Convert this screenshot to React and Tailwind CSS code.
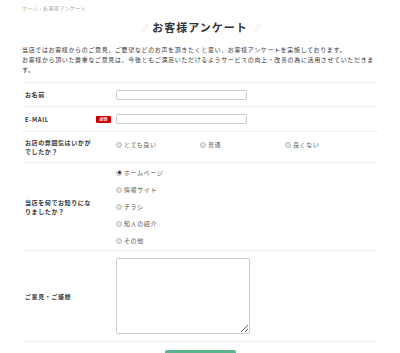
const jp = { fontFamily: '"Noto Sans CJK JP", "Noto Sans", sans-serif' };

const Radio = ({ label, checked }) => (
  <label className="flex items-center gap-[2px] text-[6px] tracking-[0.6px] text-[#555]">
    <span className="size-[6px] rounded-full border border-[#bbb] bg-[#e8e8e8] flex items-center justify-center">
      {checked && <span className="size-[3px] rounded-full bg-[#333]" />}
    </span>
    <span>{label}</span>
  </label>
);

const Row = ({ className, children }) => (
  <div className={`flex border-b border-[#eee] ${className}`}>{children}</div>
);

const Label = ({ children, required, className = "items-center" }) => (
  <div className={`w-[94px] shrink-0 pl-[3px] pr-[5px] flex justify-between ${className}`}>
    <div className="text-[6px] leading-[9px] tracking-[0.6px] font-bold text-[#333]">{children}</div>
    {required && (
      <span className="bg-[#cc0000] text-white text-[4px] font-bold rounded-[1px] w-[15px] h-[7px] flex items-center justify-center">
        必須
      </span>
    )}
  </div>
);

export default function App() {
  return (
    <div className="w-[400px] h-[353px] overflow-hidden bg-white px-[22px]" style={jp}>
      {/* breadcrumb */}
      <div className="pt-[5px] text-[5px] leading-[6px] tracking-[0.4px] text-[#999]">
        <span className="text-[#c9b98a]">ホーム</span> › お客様アンケート
      </div>

      {/* title */}
      <div className="mt-[9px] flex items-center justify-center gap-[6px]">
        <span className="text-[8px] font-light italic text-[#ddd2a8] tracking-[-1px]">//</span>
        <h1 className="text-[11px] leading-[14px] font-bold tracking-[1px] text-[#333]">お客様アンケート</h1>
        <span className="text-[8px] font-light italic text-[#ddd2a8] tracking-[-1px]">//</span>
      </div>

      {/* intro */}
      <p className="mt-[11px] text-[6px] leading-[10px] tracking-[0.64px] text-[#333]">
        当店ではお客様からのご意見、ご要望などのお声を頂きたくと思い、お客様アンケートを実施しております。
        <br />
        お客様から頂いた貴重なご意見は、今後ともご満足いただけるようサービスの向上・改善の為に活用させていただきま
        <br />
        す。
      </p>

      {/* form */}
      <div className="mt-[7px] border-t border-[#eee]">
        <Row className="h-[24px] items-center">
          <Label>お名前</Label>
          <input className="w-[131px] h-[10px] border border-[#ccc] rounded-[2px] outline-none" />
        </Row>
        <Row className="h-[25px] items-center">
          <Label required>E-MAIL</Label>
          <input className="w-[131px] h-[10px] border border-[#ccc] rounded-[2px] outline-none" />
        </Row>
        <Row className="h-[31px] items-center">
          <Label>
            お店の雰囲気はいかが
            <br />
            でしたか？
          </Label>
          <div className="self-start pt-[8px] flex">
            <div className="w-[84px]"><Radio label="とても良い" /></div>
            <div className="w-[85px]"><Radio label="普通" /></div>
            <div><Radio label="良くない" /></div>
          </div>
        </Row>
        <Row className="h-[88px] items-center">
          <Label>
            当店を何でお知りにな
            <br />
            りましたか？
          </Label>
          <div className="flex flex-col justify-center gap-[8px]">
            <Radio label="ホームページ" checked />
            <Radio label="情報サイト" />
            <Radio label="チラシ" />
            <Radio label="知人の紹介" />
            <Radio label="その他" />
          </div>
        </Row>
        <Row className="h-[91px] items-center">
          <Label>ご意見・ご感想</Label>
          <textarea className="w-[134px] h-[76px] border border-[#ccc] rounded-[2px] outline-none resize" />
        </Row>
      </div>

      <div className="mt-[8px] flex justify-center">
        <button className="w-[71px] h-[20px] rounded-[2px] bg-[#5db58d]" />
      </div>
    </div>
  );
}
